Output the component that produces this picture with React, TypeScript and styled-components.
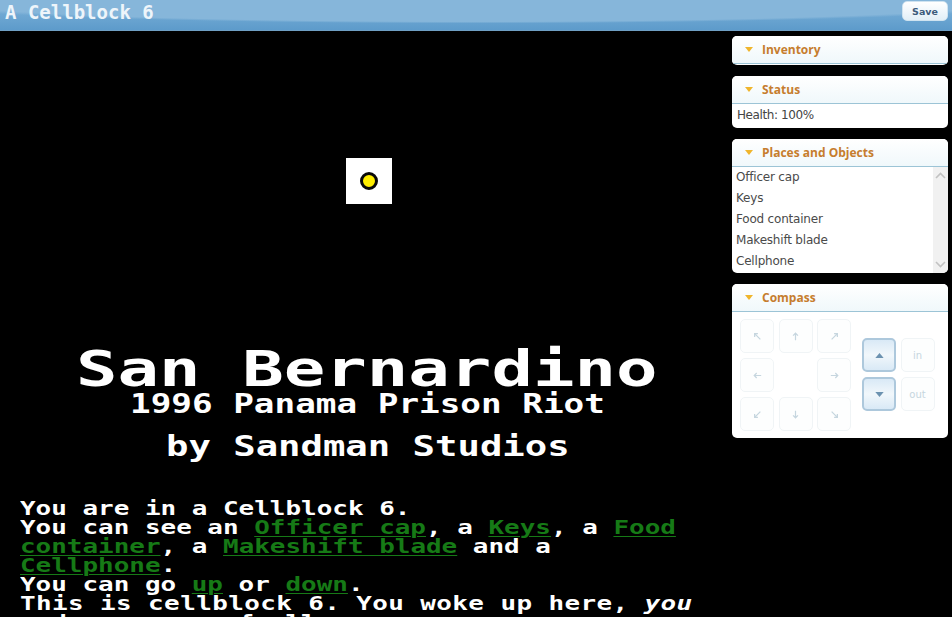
import React from "react";
import styled, { createGlobalStyle } from "styled-components";

const Global = createGlobalStyle`
  html, body { margin: 0; padding: 0; height: 100%; background: #000; overflow: hidden; }
  #root { height: 100%; }
`;

const Page = styled.div`
  display: flex;
  flex-direction: column;
  height: 617px;
  width: 952px;
  overflow: hidden;
  background: #000;
`;

const TopBar = styled.header`
  flex: none;
  height: 31px;
  box-sizing: border-box;
  display: flex;
  align-items: flex-start;
  justify-content: space-between;
  padding: 1px 4px 0 5px;
  background:
    radial-gradient(ellipse 62% 78% at 50% 0%, #86b6da 0 92%, rgba(134, 182, 218, 0) 100%),
    linear-gradient(#7fb3d9, #5d9bcb);
  border-bottom: 1px solid #6f9fc4;
`;

const GameTitle = styled.h1`
  margin: 0;
  font: bold 19px/22px "DejaVu Sans Mono", monospace;
  color: #eef5fa;
`;

const SaveButton = styled.button`
  width: 46px;
  height: 20px;
  padding: 0;
  border: 1px solid #cfe3f0;
  border-radius: 5px;
  background: linear-gradient(#ffffff, #e2eff7);
  color: #3d5c7c;
  font: bold 9.5px "DejaVu Sans", sans-serif;
`;

const Body = styled.div`
  flex: 1;
  min-height: 0;
  display: flex;
`;

const Story = styled.main`
  flex: none;
  width: 732px;
  overflow: hidden;
  box-sizing: border-box;
  padding-top: 127px;
  color: #fff;
  font-family: "DejaVu Sans Mono", monospace;
  font-weight: bold;
`;

const DotImage = styled.div`
  width: 46px;
  height: 46px;
  margin-left: 346px;
  background: #fff;
  display: flex;
  align-items: center;
  justify-content: center;
`;

const Dot = styled.span`
  display: block;
  width: 12px;
  height: 12px;
  border-radius: 50%;
  background: #ffee00;
  border: 3px solid #0a0a0a;
`;

const Heading = styled.div<{ $size: number; $stretch: number; $line: number; $top: number; $left: number }>`
  width: max-content;
  white-space: nowrap;
  margin: ${(p) => p.$top}px 0 0 ${(p) => p.$left}px;
  font-size: ${(p) => p.$size}px;
  line-height: ${(p) => p.$line}px;
  transform: scaleX(${(p) => p.$stretch});
  transform-origin: left center;
`;

const Narrative = styled.div`
  margin: 38px 0 0 20px;
  width: 522px;
  font-size: 19.5px;
  line-height: 19px;
  transform: scaleX(1.33);
  transform-origin: left top;
`;

const Wider = styled.span`
  letter-spacing: 0.3px;
`;

const StoryLink = styled.a`
  color: #167a16;
  text-decoration: underline;
  text-decoration-thickness: 1px;
  text-underline-offset: 2px;
`;

const Side = styled.aside`
  flex: none;
  width: 216px;
  padding-top: 5px;
  display: flex;
  flex-direction: column;
  gap: 11px;
`;

const Panel = styled.section<{ $height: number }>`
  height: ${(p) => p.$height}px;
  box-sizing: border-box;
  background: #fff;
  border-radius: 5px;
  overflow: hidden;
  display: flex;
  flex-direction: column;
`;

const PanelHead = styled.div`
  flex: none;
  height: 28px;
  box-sizing: border-box;
  display: flex;
  align-items: center;
  gap: 9px;
  padding: 0 0 1px 13px;
  background: linear-gradient(#ffffff, #f0f8fb);
  border-bottom: 1px solid #9cc4d6;
  color: #c67d2e;
  font: bold 12px "Open Sans", sans-serif;
`;

const Caret = styled.span`
  width: 0;
  height: 0;
  border-left: 4.5px solid transparent;
  border-right: 4.5px solid transparent;
  border-top: 5px solid #f0b52c;
`;

const StatusLine = styled.div`
  padding: 3px 0 0 5px;
  font: 12px/16px "DejaVu Sans", sans-serif;
  letter-spacing: -0.4px;
  color: #444;
`;

const ListArea = styled.div`
  flex: 1;
  min-height: 0;
  display: flex;
`;

const Items = styled.ul`
  flex: 1;
  list-style: none;
  margin: 0;
  padding: 0 0 0 4px;
  font: 12px/21px "DejaVu Sans", sans-serif;
  letter-spacing: -0.2px;
  color: #4a4a4a;
`;

const ScrollTrack = styled.div`
  flex: none;
  width: 15px;
  background: #f1f1f1;
  display: flex;
  flex-direction: column;
  justify-content: space-between;
  align-items: center;
  padding: 5px 0;
  color: #c2c2c2;
`;

const CompassArea = styled.div`
  display: flex;
  gap: 11px;
  padding: 7px 0 0 8px;
`;

const Grid = styled.div<{ $columns: number; $top?: number }>`
  display: grid;
  grid-template-columns: repeat(${(p) => p.$columns}, 34px);
  grid-auto-rows: 34px;
  column-gap: 4.5px;
  row-gap: 5px;
  align-content: start;
  padding-top: ${(p) => p.$top ?? 0}px;
`;

const CompassButton = styled.div<{ $on?: boolean; $ghost?: boolean }>`
  box-sizing: border-box;
  display: flex;
  align-items: center;
  justify-content: center;
  border-radius: 5px;
  border: ${(p) => (p.$ghost ? "none" : p.$on ? "2px solid #adc8dc" : "1px solid #f0f4f6")};
  background: ${(p) =>
    p.$ghost ? "transparent" : p.$on ? "linear-gradient(#d9e9f6, #f1f7fb 50%, #d9e9f6)" : "#fdfefe"};
  color: ${(p) => (p.$on ? "#6c92b0" : "#c6d6df")};
  font: 10px "DejaVu Sans", sans-serif;
`;

const Chevron = ({ d }: { d: string }) => (
  <svg width="11" height="7" viewBox="0 0 11 7" fill="none" stroke="currentColor" strokeWidth="1.6">
    <path d={d} />
  </svg>
);

const Arrow = ({ d }: { d: string }) => (
  <svg width="9" height="9" viewBox="0 0 11 11" fill="none" stroke="currentColor" strokeWidth="1.5">
    <path d={d} />
  </svg>
);

const Tri = ({ up }: { up?: boolean }) => (
  <svg width="9" height="5" viewBox="0 0 10 6" fill="currentColor">
    <path d={up ? "M0 6L5 0L10 6Z" : "M0 0L10 0L5 6Z"} />
  </svg>
);

const arrows = [
  "M9 9L2 2M2 6V2H6",
  "M5.5 10V1.5M2.5 4.5L5.5 1.5L8.5 4.5",
  "M2 9L9 2M5 2H9V6",
  "M10 5.5H1.5M4.5 2.5L1.5 5.5L4.5 8.5",
  "",
  "M1 5.5H9.5M6.5 2.5L9.5 5.5L6.5 8.5",
  "M9 2L2 9M2 5V9H6",
  "M5.5 1V9.5M2.5 6.5L5.5 9.5L8.5 6.5",
  "M2 2L9 9M9 5V9H5",
];

export default function App() {
  return (
    <Page>
      <Global />
      <TopBar>
        <GameTitle>A Cellblock 6</GameTitle>
        <SaveButton>Save</SaveButton>
      </TopBar>
      <Body>
        <Story>
          <DotImage>
            <Dot />
          </DotImage>
          <Heading $size={50} $stretch={1.38} $line={50} $top={140} $left={76}>
            San Bernardino
          </Heading>
          <Heading $size={27} $stretch={1.27} $line={26} $top={-3} $left={130}>
            1996 Panama Prison Riot
          </Heading>
          <Heading $size={28} $stretch={1.33} $line={28} $top={16} $left={166}>
            by Sandman Studios
          </Heading>
          <Narrative>
            You are in a Cellblock 6.
            <br />
            You can see an <StoryLink>Officer cap</StoryLink>, a <StoryLink>Keys</StoryLink>, a{" "}
            <StoryLink>Food container</StoryLink>, a <StoryLink>Makeshift blade</StoryLink> and a{" "}
            <StoryLink>Cellphone</StoryLink>.
            <br />
            You can go <StoryLink>up</StoryLink> or <StoryLink>down</StoryLink>.
            <br />
            <Wider>
              This is cellblock 6. You woke up here, <em>you</em>
            </Wider>{" "}
            and your men of all corners.
          </Narrative>
        </Story>
        <Side>
          <Panel $height={29}>
            <PanelHead>
              <Caret />
              Inventory
            </PanelHead>
          </Panel>
          <Panel $height={52}>
            <PanelHead>
              <Caret />
              Status
            </PanelHead>
            <StatusLine>Health: 100%</StatusLine>
          </Panel>
          <Panel $height={134}>
            <PanelHead>
              <Caret />
              Places and Objects
            </PanelHead>
            <ListArea>
              <Items>
                <li>Officer cap</li>
                <li>Keys</li>
                <li>Food container</li>
                <li>Makeshift blade</li>
                <li>Cellphone</li>
              </Items>
              <ScrollTrack>
                <Chevron d="M1 6L5.5 1.5L10 6" />
                <Chevron d="M1 1L5.5 5.5L10 1" />
              </ScrollTrack>
            </ListArea>
          </Panel>
          <Panel $height={154}>
            <PanelHead>
              <Caret />
              Compass
            </PanelHead>
            <CompassArea>
              <Grid $columns={3}>
                {arrows.map((d, i) => (
                  <CompassButton key={i} $ghost={!d}>
                    {d && <Arrow d={d} />}
                  </CompassButton>
                ))}
              </Grid>
              <Grid $columns={2} $top={19}>
                <CompassButton $on>
                  <Tri up />
                </CompassButton>
                <CompassButton>in</CompassButton>
                <CompassButton $on>
                  <Tri />
                </CompassButton>
                <CompassButton>out</CompassButton>
              </Grid>
            </CompassArea>
          </Panel>
        </Side>
      </Body>
    </Page>
  );
}
